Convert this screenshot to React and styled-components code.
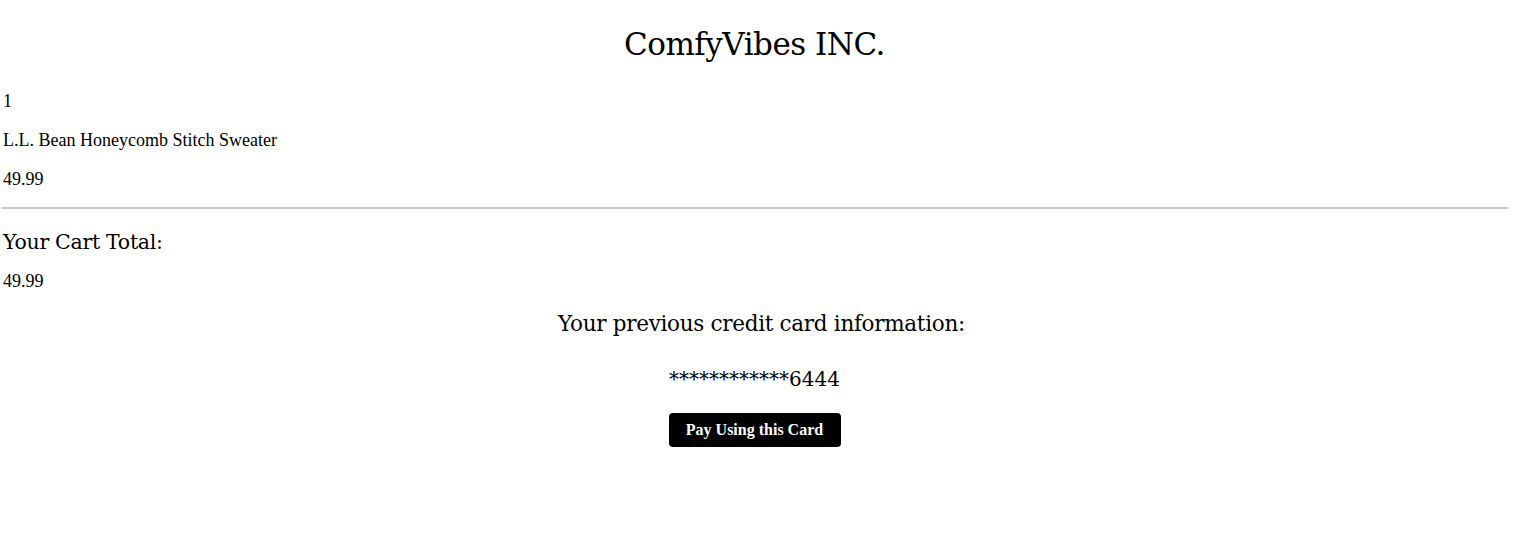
import React from "react";
import styled, { createGlobalStyle } from "styled-components";

const Global = createGlobalStyle`
  html, body { margin: 0; padding: 0; background: #fff; }
  body { font-family: "Liberation Serif", "Times New Roman", serif; color: #000; }
`;

const Page = styled.div`
  display: flex;
  flex-direction: column;
  padding: 0 6px 0 1px;
`;

const Title = styled.h1`
  font-family: "DejaVu Serif", serif;
  font-weight: 400;
  font-size: 31px;
  text-align: center;
  margin: 26px 0 29px;
  letter-spacing: -0.5px;
`;

const Line = styled.p`
  font-size: 18px;
  margin: 0 0 18px;
  padding-left: 2px;
  line-height: 21px;
`;

const Rule = styled.hr`
  border: none;
  height: 2px;
  background: #c8c8c8;
  margin: -1px 0 21px;
  width: 100%;
`;

const SubTitle = styled.h2`
  font-family: "DejaVu Serif", serif;
  font-weight: 400;
  font-size: 20.5px;
  margin: 0 0 17px;
  padding-left: 2px;
  letter-spacing: -0.3px;
`;

const CardSection = styled.section`
  display: flex;
  flex-direction: column;
  align-items: center;
  margin-top: 1px;
`;

const CardTitle = styled.h3`
  font-family: "DejaVu Serif", serif;
  font-weight: 400;
  font-size: 21.5px;
  margin: 0 0 31px;
  padding-left: 14px;
  letter-spacing: -0.3px;
`;

const CardNumber = styled.div`
  font-family: "DejaVu Serif", serif;
  font-size: 20px;
  margin-bottom: 22px;
`;

const PayButton = styled.button`
  background: #000;
  color: #fff;
  border: none;
  border-radius: 4px;
  font-family: "Liberation Serif", "Times New Roman", serif;
  font-weight: 700;
  font-size: 16px;
  width: 172px;
  height: 34px;
  cursor: pointer;
`;

export default function App() {
  return (
    <>
      <Global />
      <Page>
        <Title>ComfyVibes INC.</Title>
        <Line>1</Line>
        <Line>L.L. Bean Honeycomb Stitch Sweater</Line>
        <Line>49.99</Line>
        <Rule />
        <SubTitle>Your Cart Total:</SubTitle>
        <Line>49.99</Line>
        <CardSection>
          <CardTitle>Your previous credit card information:</CardTitle>
          <CardNumber>************6444</CardNumber>
          <PayButton>Pay Using this Card</PayButton>
        </CardSection>
      </Page>
    </>
  );
}
